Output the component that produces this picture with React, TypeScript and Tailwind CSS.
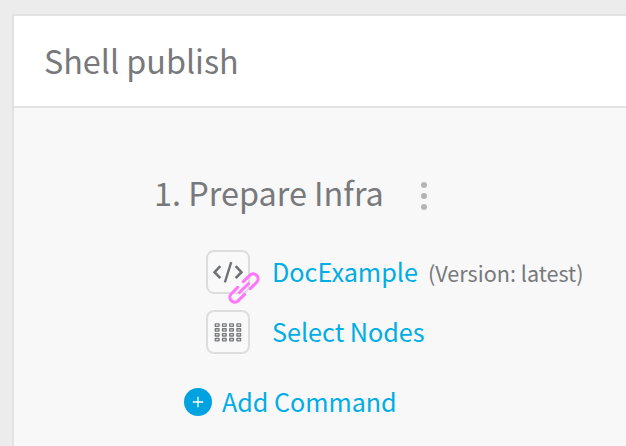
import type { ReactNode } from "react";

function IconTile({ children }: { children: ReactNode }) {
  return (
    <div className="relative flex h-11 w-11 shrink-0 items-center justify-center rounded-lg border-2 border-[#dddddd] bg-[#f9f9f9]">
      {children}
    </div>
  );
}

function CodeIcon() {
  return (
    <svg width="30" height="22" viewBox="0 0 30 22" fill="none" stroke="#6f7276" strokeWidth="2.6" className="shrink-0">
      <path d="M7.3 5.2 1.6 11.2l5.7 6M22.7 5.2l5.7 6-5.7 6" />
      <path d="M18.2 1.2 11.9 21.4" strokeWidth="2.4" />
    </svg>
  );
}

function LinkIcon() {
  return (
    <svg width="40" height="40" viewBox="-20 -20 40 40" fill="none" className="absolute left-[16px] top-[16px]">
      <g transform="rotate(-45)" stroke="#ff75fb" strokeWidth="3.1" strokeLinecap="round">
        <path d="M4-4.9h9a4.9 4.9 0 0 1 0 9.8H4" />
        <path d="M-4-4.9h-9a4.9 4.9 0 0 0 0 9.8h9" />
        <path d="M-6.5 0h13" strokeWidth="2.9" />
      </g>
    </svg>
  );
}

function NodesIcon() {
  return (
    <svg width="28" height="20" viewBox="0 0 28 20" fill="none" stroke="#77797c" strokeWidth="1.35" className="shrink-0">
      {[0, 1, 2, 3].map((row) =>
        [0, 1, 2, 3].map((col) => (
          <rect key={`${row}-${col}`} x={1.3 + col * 7.2} y={1.9 + row * 4.85} width="3.7" height="2.4" rx="0.3" />
        )),
      )}
    </svg>
  );
}

export default function App() {
  return (
    <div className="h-[446px] w-[626px] overflow-hidden bg-[#ececec] pl-[12px] pt-[14px] font-['Noto_Sans_CJK_SC','Noto_Sans',sans-serif] text-[#77797c]">
      <section className="h-full overflow-hidden rounded-tl-[2px] border-l-2 border-t-2 border-[#e2e2e2] bg-[#f8f8f8]">
        <header className="flex h-[92px] items-center border-b-2 border-[#e2e2e2] bg-white pb-[2px] pl-[30px]">
          <h1 className="whitespace-nowrap text-[32.3px] leading-[48px]">Shell publish</h1>
        </header>
        <div className="pt-[60px]">
          <div className="flex h-[48px] items-center pl-[140px]">
            <h2 className="w-[267px] whitespace-nowrap text-[32.4px] leading-[48px]">1. Prepare Infra</h2>
            <div className="flex flex-col gap-[5px] pt-2">
              <span className="h-1.5 w-1.5 rounded-full bg-[#b4b4b4]" />
              <span className="h-1.5 w-1.5 rounded-full bg-[#b4b4b4]" />
              <span className="h-1.5 w-1.5 rounded-full bg-[#b4b4b4]" />
            </div>
          </div>
          <div className="mt-[34px] flex flex-col gap-4 pl-[192px]">
            <div className="flex h-11 items-center">
              <IconTile>
                <CodeIcon />
                <LinkIcon />
              </IconTile>
              <a className="ml-[22px] w-[156px] whitespace-nowrap pb-[2px] text-[25.2px] leading-[36px] text-[#00ade4]">DocExample</a>
              <span className="whitespace-nowrap pt-[2px] text-[21.6px] leading-[36px]">(Version: latest)</span>
            </div>
            <div className="flex h-11 items-center">
              <IconTile>
                <NodesIcon />
              </IconTile>
              <a className="ml-[22px] whitespace-nowrap pb-[2px] text-[25.2px] leading-[36px] text-[#00ade4]">Select Nodes</a>
            </div>
          </div>
          <button className="mt-[30px] flex h-[36px] items-center pl-[170px] text-[#00ade4]">
            <span className="flex h-7 w-7 items-center justify-center rounded-full bg-[#00a3e0]">
              <svg width="12" height="12" viewBox="0 0 12 12" stroke="#ffffff" strokeWidth="1.3">
                <path d="M6 .8v10.4M.8 6h10.4" />
              </svg>
            </span>
            <span className="ml-[10px] whitespace-nowrap pb-[2px] text-[25.1px] leading-[36px]">Add Command</span>
          </button>
        </div>
      </section>
    </div>
  );
}
